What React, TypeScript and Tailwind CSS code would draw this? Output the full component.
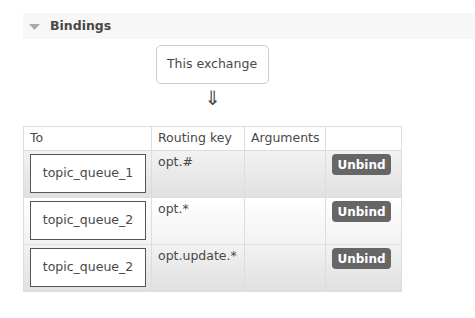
import React from 'react';

const bindings = [
  { queue: 'topic_queue_1', key: 'opt.#' },
  { queue: 'topic_queue_2', key: 'opt.*' },
  { queue: 'topic_queue_2', key: 'opt.update.*' },
];

export default function App() {
  return (
    <div className="w-[475px] h-[318px] bg-white pt-[13px] pl-[23px] text-[12.5px] text-[#484848]" style={{ fontFamily: '"DejaVu Sans", Verdana, sans-serif' }}>
      <div className="h-[26px] bg-[#f7f7f7] flex items-center pl-[6px]">
        <svg width="11" height="6" viewBox="0 0 11 6" className="mr-[10px] mt-[1px]">
          <polygon points="0,0 11,0 5.5,6" fill="#aaaaaa" />
        </svg>
        <span className="font-bold text-[12.5px] text-[#484848]">Bindings</span>
      </div>

      <div className="w-[378px] flex flex-col items-center">
        <div className="mt-[6px] w-[113px] h-[39px] border border-[#cccccc] rounded-[5px] flex items-center justify-center text-[12.5px] text-[#484848]">
          This exchange
        </div>
        <div className="h-[28px] pl-[2px] flex items-center text-[20px] leading-none text-[#484848]">⇓</div>
      </div>

      <table className="mt-[14px] w-[378px] table-fixed border-collapse text-[12.5px] text-[#484848]">
        <colgroup>
          <col className="w-[128px]" />
          <col className="w-[93px]" />
          <col className="w-[81px]" />
          <col className="w-[76px]" />
        </colgroup>
        <thead>
          <tr className="h-[24px] bg-white">
            <th className="border border-[#dddddd] text-left font-normal px-[6px]">To</th>
            <th className="border border-[#dddddd] text-left font-normal px-[6px]">Routing key</th>
            <th className="border border-[#dddddd] text-left font-normal px-[6px] whitespace-nowrap">Arguments</th>
            <th className="border border-[#dddddd]"></th>
          </tr>
        </thead>
        <tbody>
          {bindings.map((b, i) => (
            <tr
              key={i}
              className={i % 2 === 0 ? 'h-[47px] bg-gradient-to-b from-[#f2f2f2] to-[#e0e0e0]' : 'h-[47px] bg-gradient-to-b from-[#ffffff] to-[#f2f2f2]'}
            >
              <td className="border border-[#dddddd] px-[6px] py-[2px] align-top">
                <div className="mt-px w-[116px] h-[39px] border border-[#555555] bg-white flex items-center justify-center">
                  {b.queue}
                </div>
              </td>
              <td className="border border-[#dddddd] px-[6px] pt-[2px] align-top whitespace-nowrap">{b.key}</td>
              <td className="border border-[#dddddd]"></td>
              <td className="border border-[#dddddd] px-[6px] pt-[3px] align-top">
                <button className="w-[59px] h-[21px] rounded-[4px] bg-[#666666] text-white font-bold text-[12px] leading-none">
                  Unbind
                </button>
              </td>
            </tr>
          ))}
        </tbody>
      </table>
    </div>
  );
}
